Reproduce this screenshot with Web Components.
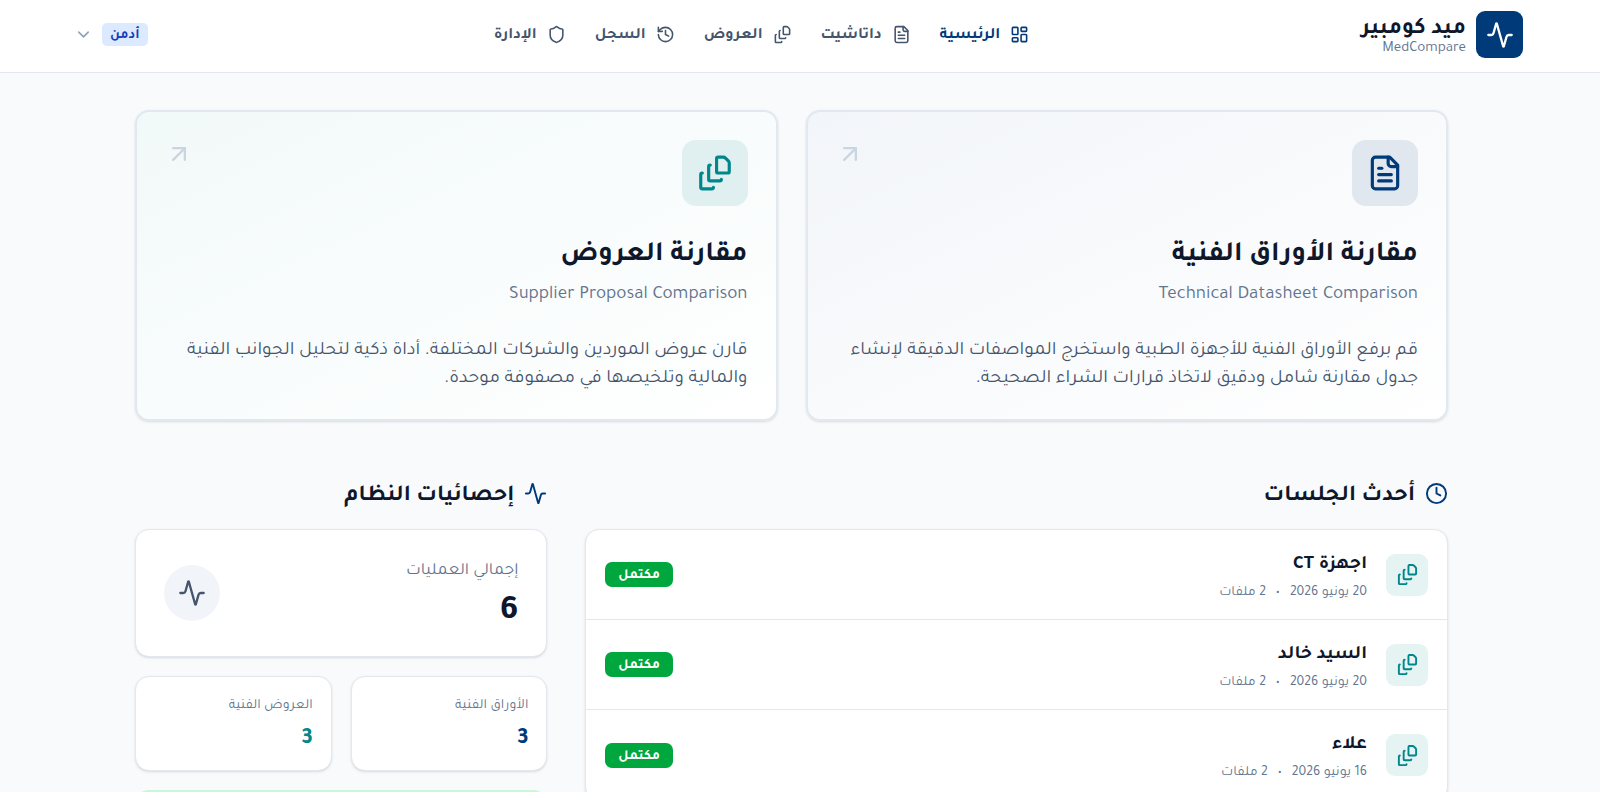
<!DOCTYPE html>
<html lang="ar" dir="rtl">
<head>
<meta charset="utf-8">
<title>ميد كومبير</title>
<style>
  body {
    margin: 0;
    background: #f8fafc;
    color: #0f172b;
    font-family: Tajawal, "Noto Kufi Arabic", "Noto Sans", sans-serif;
  }
</style>
</head>
<body>
<med-header>
  <med-logo slot="brand" name="ميد كومبير" latin="MedCompare"></med-logo>
  <nav-item icon="grid" active>الرئيسية</nav-item>
  <nav-item icon="file">داتاشيت</nav-item>
  <nav-item icon="copies">العروض</nav-item>
  <nav-item icon="history">السجل</nav-item>
  <nav-item icon="shield">الإدارة</nav-item>
  <user-menu slot="user">أدمن</user-menu>
</med-header>

<med-dashboard>
  <tool-card slot="tools" icon="file" tone="navy">
    <span slot="title">مقارنة الأوراق الفنية</span>
    <span slot="subtitle">Technical Datasheet Comparison</span>
    قم برفع الأوراق الفنية للأجهزة الطبية واستخرج المواصفات الدقيقة لإنشاء جدول مقارنة شامل ودقيق لاتخاذ قرارات الشراء الصحيحة.
  </tool-card>
  <tool-card slot="tools" icon="copies" tone="teal">
    <span slot="title">مقارنة العروض</span>
    <span slot="subtitle">Supplier Proposal Comparison</span>
    قارن عروض الموردين والشركات المختلفة. أداة ذكية لتحليل الجوانب الفنية والمالية وتلخيصها في مصفوفة موحدة.
  </tool-card>

  <section-title slot="sessions" icon="clock">أحدث الجلسات</section-title>
  <session-list slot="sessions">
    <session-row date="20 يونيو 2026" files="2 ملفات" status="مكتمل">اجهزة CT</session-row>
    <session-row date="20 يونيو 2026" files="2 ملفات" status="مكتمل">السيد خالد</session-row>
    <session-row date="16 يونيو 2026" files="2 ملفات" status="مكتمل">علاء</session-row>
  </session-list>

  <section-title slot="stats" icon="activity">إحصائيات النظام</section-title>
  <stats-grid slot="stats">
    <stat-card size="large" value="6" icon="activity">إجمالي العمليات</stat-card>
    <stat-card value="3" tone="navy">الأوراق الفنية</stat-card>
    <stat-card value="3" tone="teal">العروض الفنية</stat-card>
    <status-card></status-card>
  </stats-grid>
</med-dashboard>

<script>
const ICONS = {
  activity: '<path d="M22 12h-2.48a2 2 0 0 0-1.93 1.46l-2.35 8.36a.25.25 0 0 1-.48 0L9.24 2.18a.25.25 0 0 0-.48 0l-2.35 8.36A2 2 0 0 1 4.49 12H2"/>',
  grid: '<rect width="7" height="9" x="3" y="3" rx="1"/><rect width="7" height="5" x="14" y="3" rx="1"/><rect width="7" height="9" x="14" y="12" rx="1"/><rect width="7" height="5" x="3" y="16" rx="1"/>',
  file: '<path d="M15 2H6a2 2 0 0 0-2 2v16a2 2 0 0 0 2 2h12a2 2 0 0 0 2-2V7Z"/><path d="M14 2v4a2 2 0 0 0 2 2h4"/><path d="M10 9H8"/><path d="M16 13H8"/><path d="M16 17H8"/>',
  copies: '<path d="M14 2h3.2a2 2 0 0 1 1.4.6l1.8 1.8a2 2 0 0 1 .6 1.4V11a1 1 0 0 1-1 1h-6a1 1 0 0 1-1-1V3a1 1 0 0 1 1-1z"/><path d="M9 7a1 1 0 0 0-1 1v8a1 1 0 0 0 1 1h6a1 1 0 0 0 1-1"/><path d="M4 12a1 1 0 0 0-1 1v8a1 1 0 0 0 1 1h6a1 1 0 0 0 1-1"/>',
  history: '<path d="M3 12a9 9 0 1 0 9-9 9.75 9.75 0 0 0-6.74 2.74L3 8"/><path d="M3 3v5h5"/><path d="M12 7v5l4 2"/>',
  shield: '<path d="M20 13c0 5-3.5 7.5-7.66 8.95a1 1 0 0 1-.67-.01C7.5 20.5 4 18 4 13V6a1 1 0 0 1 1-1c2 0 4.5-1.2 6.24-2.72a1.17 1.17 0 0 1 1.52 0C14.51 3.81 17 5 19 5a1 1 0 0 1 1 1z"/>',
  clock: '<circle cx="12" cy="12" r="10"/><path d="M12 6v6l4 2"/>',
  chevron: '<path d="m6 9 6 6 6-6"/>',
  arrow: '<path d="M7 7h10v10"/><path d="M7 17 17 7"/>'
};

function icon(name, size) {
  return `<svg width="${size}" height="${size}" viewBox="0 0 24 24" fill="none" stroke="currentColor" stroke-width="2" stroke-linecap="round" stroke-linejoin="round" aria-hidden="true">${ICONS[name]}</svg>`;
}

const BASE = `
  *, :host { box-sizing: border-box; }
  svg { display: block; flex: none; }
  h1, h2, h3, p { margin: 0; }
`;

// Shared base: renders the markup once, on connect
class MedElement extends HTMLElement {
  connectedCallback() {
    if (this.shadowRoot) return;
    this.attachShadow({ mode: 'open' });
    this.shadowRoot.innerHTML = `<style>${BASE}${this.styles()}</style>${this.render()}`;
  }
  attr(name) {
    return this.getAttribute(name) || '';
  }
}

class MedHeader extends MedElement {
  styles() {
    return `
      :host { display: block; background: #fff; border-bottom: 1px solid #e2e8f0; }
      header {
        display: flex;
        justify-content: space-between;
        align-items: center;
        padding: 11px 77px 14px 60px;
      }
      nav { display: flex; gap: 29px; }
    `;
  }
  render() {
    return `
      <header>
        <slot name="brand"></slot>
        <nav><slot></slot></nav>
        <slot name="user"></slot>
      </header>
    `;
  }
}

class MedLogo extends MedElement {
  styles() {
    return `
      :host { display: block; }
      a { display: flex; align-items: center; gap: 10px; color: inherit; text-decoration: none; }
      .mark {
        display: grid;
        place-items: center;
        width: 47px;
        height: 47px;
        border-radius: 9px;
        background: #003a78;
        color: #fff;
      }
      .words { padding-top: 4px; }
      .name { display: block; font-size: 23px; font-weight: 700; line-height: 24px; }
      .latin { display: block; font-size: 15px; line-height: 14px; color: #62748e; }
    `;
  }
  render() {
    return `
      <a href="#">
        <span class="mark">${icon('activity', 28)}</span>
        <span class="words">
          <span class="name">${this.attr('name')}</span>
          <span class="latin">${this.attr('latin')}</span>
        </span>
      </a>
    `;
  }
}

class NavItem extends MedElement {
  styles() {
    return `
      :host { display: block; }
      a {
        display: flex;
        align-items: center;
        gap: 10px;
        font-size: 16px;
        font-weight: 700;
        line-height: 24px;
        color: #45556c;
        text-decoration: none;
      }
      span { padding-top: 3px; }
      :host([active]) a { color: #003a78; }
    `;
  }
  render() {
    return `<a href="#">${icon(this.attr('icon'), 19)}<span><slot></slot></span></a>`;
  }
}

class UserMenu extends MedElement {
  styles() {
    return `
      :host { display: block; }
      button {
        display: flex;
        align-items: center;
        gap: 9px;
        padding: 0 14px;
        border: 0;
        background: none;
        font: inherit;
        color: #90a1b9;
        cursor: pointer;
      }
      .role {
        padding: 4px 8px 0;
        border-radius: 5px;
        background: #dbeafe;
        color: #193cb8;
        font-size: 14px;
        font-weight: 700;
        line-height: 19px;
      }
    `;
  }
  render() {
    return `<button type="button"><span class="role"><slot></slot></span>${icon('chevron', 19)}</button>`;
  }
}

class MedDashboard extends MedElement {
  styles() {
    return `
      :host { display: block; padding: 37px 17px 38px 0; }
      main { max-width: 1313px; margin: 0 auto; }
      .tools { display: grid; grid-template-columns: 1fr 1fr; gap: 28px; margin-bottom: 56px; }
      .columns { display: grid; grid-template-columns: repeat(3, 1fr); gap: 38px; align-items: start; }
      .sessions { grid-column: span 2; }
    `;
  }
  render() {
    return `
      <main>
        <div class="tools"><slot name="tools"></slot></div>
        <div class="columns">
          <section class="sessions"><slot name="sessions"></slot></section>
          <section><slot name="stats"></slot></section>
        </div>
      </main>
    `;
  }
}

class ToolCard extends MedElement {
  styles() {
    return `
      :host {
        --tone: #003a78;
        --tile: #e0e7ef;
        --wash: #f2f5f9;
        display: block;
        border: 2px solid #e2e8f0;
        border-radius: 14px;
        background: linear-gradient(to bottom right, var(--wash), #fff);
        box-shadow: 0 1px 3px rgba(0, 0, 0, 0.1), 0 1px 2px -1px rgba(0, 0, 0, 0.1);
      }
      :host([tone="teal"]) { --tone: #00868b; --tile: #e0f0f1; --wash: #f2f9f9; }
      article { padding: 28px 28px 25px; }
      .top { display: flex; justify-content: space-between; align-items: start; margin-bottom: 31px; color: #cad5e2; }
      .tile {
        display: grid;
        place-items: center;
        width: 66px;
        height: 66px;
        border-radius: 14px;
        background: var(--tile);
        color: var(--tone);
      }
      h2 { font-size: 28px; font-weight: 700; line-height: 38px; margin-bottom: 9px; }
      .subtitle { font-size: 19px; line-height: 24px; color: #62748e; margin-bottom: 30px; }
      .text { font-size: 19px; line-height: 28px; color: #45556c; }
    `;
  }
  render() {
    return `
      <article>
        <div class="top">
          <span class="tile">${icon(this.attr('icon'), 38)}</span>
          ${icon('arrow', 28)}
        </div>
        <h2><slot name="title"></slot></h2>
        <p class="subtitle"><slot name="subtitle"></slot></p>
        <p class="text"><slot></slot></p>
      </article>
    `;
  }
}

class SectionTitle extends MedElement {
  styles() {
    return `
      :host { display: block; margin-bottom: 19px; }
      h2 { display: flex; align-items: center; gap: 10px; font-size: 23px; font-weight: 700; line-height: 27px; }
      span { padding-top: 6px; }
      svg { color: #003a78; }
    `;
  }
  render() {
    return `<h2>${icon(this.attr('icon'), 23)}<span><slot></slot></span></h2>`;
  }
}

class SessionList extends MedElement {
  styles() {
    return `
      :host {
        display: block;
        overflow: hidden;
        border: 1px solid #e2e8f0;
        border-radius: 14px;
        background: #fff;
        box-shadow: 0 1px 3px rgba(0, 0, 0, 0.1), 0 1px 2px -1px rgba(0, 0, 0, 0.1);
      }
      ::slotted(:not(:last-child)) { border-bottom: 1px solid #e2e8f0; }
    `;
  }
  render() {
    return `<slot></slot>`;
  }
}

class SessionRow extends MedElement {
  styles() {
    return `
      :host { display: flex; align-items: center; gap: 19px; min-height: 90px; padding: 0 19px; }
      .tile {
        display: grid;
        place-items: center;
        width: 42px;
        height: 42px;
        border-radius: 9px;
        background: #e5f3f3;
        color: #00868b;
      }
      .body { flex: 1; padding-top: 5px; }
      h3 { font-size: 19px; font-weight: 700; line-height: 28px; margin-bottom: 3px; }
      .meta { display: flex; gap: 10px; font-size: 14px; line-height: 20px; color: #62748e; }
      .status {
        padding: 5px 13px 1px;
        border-radius: 7px;
        background: #00a63e;
        color: #fff;
        font-size: 14px;
        font-weight: 700;
        line-height: 19px;
      }
    `;
  }
  render() {
    return `
      <span class="tile">${icon('copies', 23)}</span>
      <div class="body">
        <h3><slot></slot></h3>
        <p class="meta"><span>${this.attr('date')}</span><span>•</span><span>${this.attr('files')}</span></p>
      </div>
      <span class="status">${this.attr('status')}</span>
    `;
  }
}

class StatsGrid extends MedElement {
  styles() {
    return `
      :host { display: grid; grid-template-columns: 1fr 1fr; gap: 19px; }
      ::slotted([size="large"]), ::slotted(status-card) { grid-column: span 2; }
    `;
  }
  render() {
    return `<slot></slot>`;
  }
}

class StatCard extends MedElement {
  styles() {
    return `
      :host {
        display: flex;
        justify-content: space-between;
        align-items: center;
        padding: 14px 18px;
        border: 1px solid #e2e8f0;
        border-radius: 14px;
        background: #fff;
        box-shadow: 0 1px 3px rgba(0, 0, 0, 0.1), 0 1px 2px -1px rgba(0, 0, 0, 0.1);
      }
      .figures { padding-top: 6px; }
      .label { font-size: 14px; line-height: 19px; color: #62748e; margin-bottom: 7px; }
      .value { font-size: 23px; font-weight: 700; line-height: 33px; }
      :host([tone="navy"]) .value { color: #003a78; }
      :host([tone="teal"]) .value { color: #00868b; }
      :host([size="large"]) { padding: 22px 28px; }
      :host([size="large"]) .figures { padding-top: 8px; }
      :host([size="large"]) .label { font-size: 17px; line-height: 24px; margin-bottom: 8px; }
      :host([size="large"]) .value { font-size: 35px; line-height: 42px; }
      .circle {
        display: grid;
        place-items: center;
        width: 56px;
        height: 56px;
        border-radius: 50%;
        background: #f1f5f9;
        color: #45556c;
      }
    `;
  }
  render() {
    const badge = this.hasAttribute('icon') ? `<span class="circle">${icon(this.attr('icon'), 28)}</span>` : '';
    return `
      <div class="figures">
        <p class="label"><slot></slot></p>
        <p class="value">${this.attr('value')}</p>
      </div>
      ${badge}
    `;
  }
}

class StatusCard extends MedElement {
  styles() {
    return `
      :host { display: block; min-height: 96px; border: 2px solid #c8f7d9; border-radius: 14px; background: #d0fae0; }
    `;
  }
  render() {
    return `<slot></slot>`;
  }
}

customElements.define('med-header', MedHeader);
customElements.define('med-logo', MedLogo);
customElements.define('nav-item', NavItem);
customElements.define('user-menu', UserMenu);
customElements.define('med-dashboard', MedDashboard);
customElements.define('tool-card', ToolCard);
customElements.define('section-title', SectionTitle);
customElements.define('session-list', SessionList);
customElements.define('session-row', SessionRow);
customElements.define('stats-grid', StatsGrid);
customElements.define('stat-card', StatCard);
customElements.define('status-card', StatusCard);
</script>
</body>
</html>
